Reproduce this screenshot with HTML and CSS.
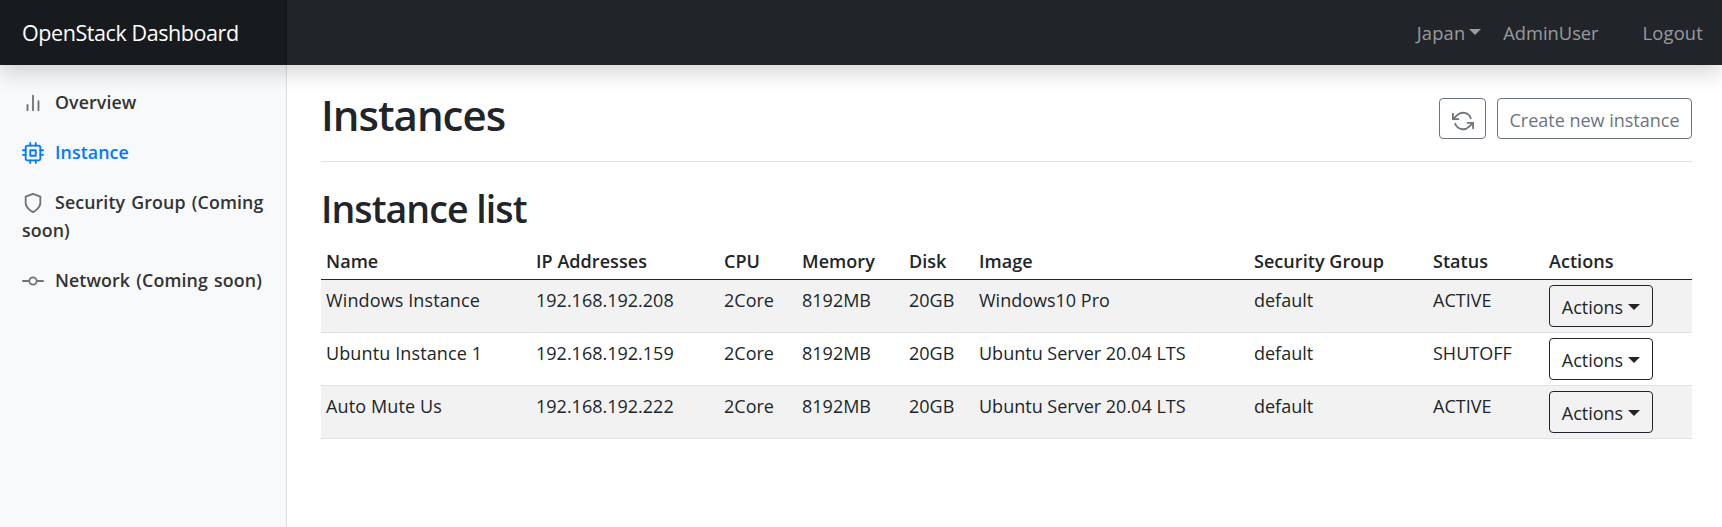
FILE: index.html
```html
<!DOCTYPE html>
<html lang="en">
<head>
<meta charset="utf-8">
<title>OpenStack Dashboard</title>
<link rel="stylesheet" href="styles.css">
</head>
<body>
<header class="navbar">
  <a class="brand">OpenStack Dashboard</a>
  <nav class="top-links">
    <a class="top-link region">Japan<span class="caret"></span></a>
    <a class="top-link user">AdminUser</a>
    <a class="top-link logout">Logout</a>
  </nav>
</header>
<div class="shell">
  <aside class="sidebar">
    <a class="side-link"><svg class="icon" viewBox="0 0 24 24"><path d="M18 20V10M12 20V4M6 20v-6"/></svg>Overview</a>
    <a class="side-link active"><svg class="icon" viewBox="0 0 24 24"><rect x="4" y="4" width="16" height="16" rx="2"/><rect x="9" y="9" width="6" height="6"/><path d="M9 1v3M15 1v3M9 20v3M15 20v3M20 9h3M20 14h3M1 9h3M1 14h3"/></svg>Instance</a>
    <a class="side-link"><svg class="icon" viewBox="0 0 24 24"><path d="M12 22s8-4 8-10V5l-8-3-8 3v7c0 6 8 10 8 10z"/></svg>Security Group (Coming soon)</a>
    <a class="side-link"><svg class="icon" viewBox="0 0 24 24"><circle cx="12" cy="12" r="4"/><path d="M1.05 12H7M17.01 12h5.95"/></svg>Network (Coming soon)</a>
  </aside>
  <main class="content">
    <div class="page-head">
      <h1 class="title">Instances</h1>
      <div class="toolbar">
        <button class="btn refresh" aria-label="Refresh"><svg class="icon" viewBox="0 0 24 24"><path d="M1 4v6h6M23 20v-6h-6"/><path d="M20.49 9A9 9 0 0 0 5.64 5.64L1 10m22 4l-4.64 4.36A9 9 0 0 1 3.51 15"/></svg></button>
        <button class="btn create">Create new instance</button>
      </div>
    </div>
    <h2 class="subtitle">Instance list</h2>
    <table class="table">
      <colgroup><col class="c-name"><col class="c-ip"><col class="c-cpu"><col class="c-mem"><col class="c-disk"><col class="c-image"><col class="c-group"><col class="c-status"><col></colgroup>
      <thead>
        <tr><th>Name</th><th>IP Addresses</th><th>CPU</th><th>Memory</th><th>Disk</th><th>Image</th><th>Security Group</th><th>Status</th><th>Actions</th></tr>
      </thead>
      <tbody>
        <tr><td>Windows Instance</td><td>192.168.192.208</td><td>2Core</td><td>8192MB</td><td>20GB</td><td>Windows10 Pro</td><td>default</td><td>ACTIVE</td><td><button class="btn dark">Actions<span class="caret"></span></button></td></tr>
        <tr><td>Ubuntu Instance 1</td><td>192.168.192.159</td><td>2Core</td><td>8192MB</td><td>20GB</td><td>Ubuntu Server 20.04 LTS</td><td>default</td><td>SHUTOFF</td><td><button class="btn dark">Actions<span class="caret"></span></button></td></tr>
        <tr><td>Auto Mute Us</td><td>192.168.192.222</td><td>2Core</td><td>8192MB</td><td>20GB</td><td>Ubuntu Server 20.04 LTS</td><td>default</td><td>ACTIVE</td><td><button class="btn dark">Actions<span class="caret"></span></button></td></tr>
      </tbody>
    </table>
  </main>
</div>
</body>
</html>
```

FILE: styles.css
```css
* { box-sizing: border-box; }

body {
  margin: 0;
  height: 527px;
  overflow: hidden;
  display: flex;
  flex-direction: column;
  background: #fff;
  color: #212529;
  font: 400 18px/28px "Segoe UI", "Open Sans", "Noto Sans", sans-serif;
}

.navbar {
  position: relative;
  z-index: 1;
  flex: none;
  height: 65px;
  display: flex;
  justify-content: space-between;
  align-items: center;
  background: #212529;
  box-shadow: 0 9px 19px rgba(0, 0, 0, .15);
}

.brand {
  width: 287px;
  height: 65px;
  padding-left: 22px;
  line-height: 65px;
  font-size: 21.5px;
  letter-spacing: -.42px;
  color: #fff;
  background: rgba(0, 0, 0, .25);
  box-shadow: inset -1px 0 0 rgba(0, 0, 0, .25);
}

.top-links { display: flex; padding-right: 19px; color: rgba(255, 255, 255, .55); }
.top-link { white-space: nowrap; font-size: 18.3px; }
.region { letter-spacing: .2px; }
.user { margin-left: 22px; }
.logout { margin-left: 44px; letter-spacing: .2px; }

.caret {
  display: inline-block;
  margin-left: 5px;
  vertical-align: 4px;
  border-top: 6px solid;
  border-left: 6px solid transparent;
  border-right: 6px solid transparent;
}
.region .caret { margin-left: 4px; vertical-align: 5px; }

.shell { flex: 1; display: flex; }

.sidebar {
  flex: none;
  width: 287px;
  padding-top: 12px;
  background: #f8f9fa;
  box-shadow: inset -1px 0 0 rgba(0, 0, 0, .1);
}

.side-link {
  display: block;
  padding: 11px 16px 11px 22px;
  font-weight: 600;
  font-size: 17.8px;
  letter-spacing: .1px;
  word-spacing: 1.5px;
  color: #333;
}
.active { color: #007bff; }

.icon {
  width: 22px;
  height: 22px;
  fill: none;
  stroke: currentColor;
  stroke-width: 2;
  stroke-linecap: round;
  stroke-linejoin: round;
  vertical-align: middle;
}
.side-link .icon { margin: -2px 11px 0 0; color: #727272; }
.side-link.active .icon { color: inherit; }

.content { flex: 1; padding: 33px 30px 0 34px; }

.page-head {
  display: flex;
  justify-content: space-between;
  height: 64px;
  border-bottom: 1px solid #dee2e6;
}

.title, .subtitle { margin: 0; font-weight: 600; }
.title { font-size: 42px; line-height: 34px; letter-spacing: -1px; }
.subtitle { margin-top: 23px; font-size: 37.5px; line-height: 48px; letter-spacing: -.95px; }

.toolbar { display: flex; gap: 11px; }

.btn {
  height: 41px;
  border: 1px solid #6c757d;
  border-radius: 4px;
  padding: 0 10px;
  background: transparent;
  color: #6c757d;
  font: inherit;
  white-space: nowrap;
}
.refresh { width: 47px; padding-left: 12px; }
.refresh .icon { display: block; margin-top: 4px; }
.create { width: 195px; padding-top: 3px; }
.dark {
  display: block;
  width: 104px;
  height: 42px;
  padding-top: 1px;
  border-color: #212529;
  color: #212529;
}

.table {
  width: 1371px;
  margin-top: 11px;
  table-layout: fixed;
  border-collapse: separate;
  border-spacing: 0;
}
.c-name { width: 210px; }
.c-ip { width: 188px; }
.c-cpu { width: 78px; }
.c-mem { width: 107px; }
.c-disk { width: 70px; }
.c-image { width: 275px; }
.c-group { width: 179px; }
.c-status { width: 116px; }

th, td { text-align: left; vertical-align: top; white-space: nowrap; }
th { height: 36px; padding: 3px 5px 4px; border-bottom: 1px solid #212529; font-weight: 600; letter-spacing: .05px; }
td { height: 53px; padding: 5px 5px 0; border-bottom: 1px solid #dee2e6; line-height: 30px; }
td:first-child { letter-spacing: .12px; }
tbody tr:nth-child(odd) { background: #f2f2f2; }
```
